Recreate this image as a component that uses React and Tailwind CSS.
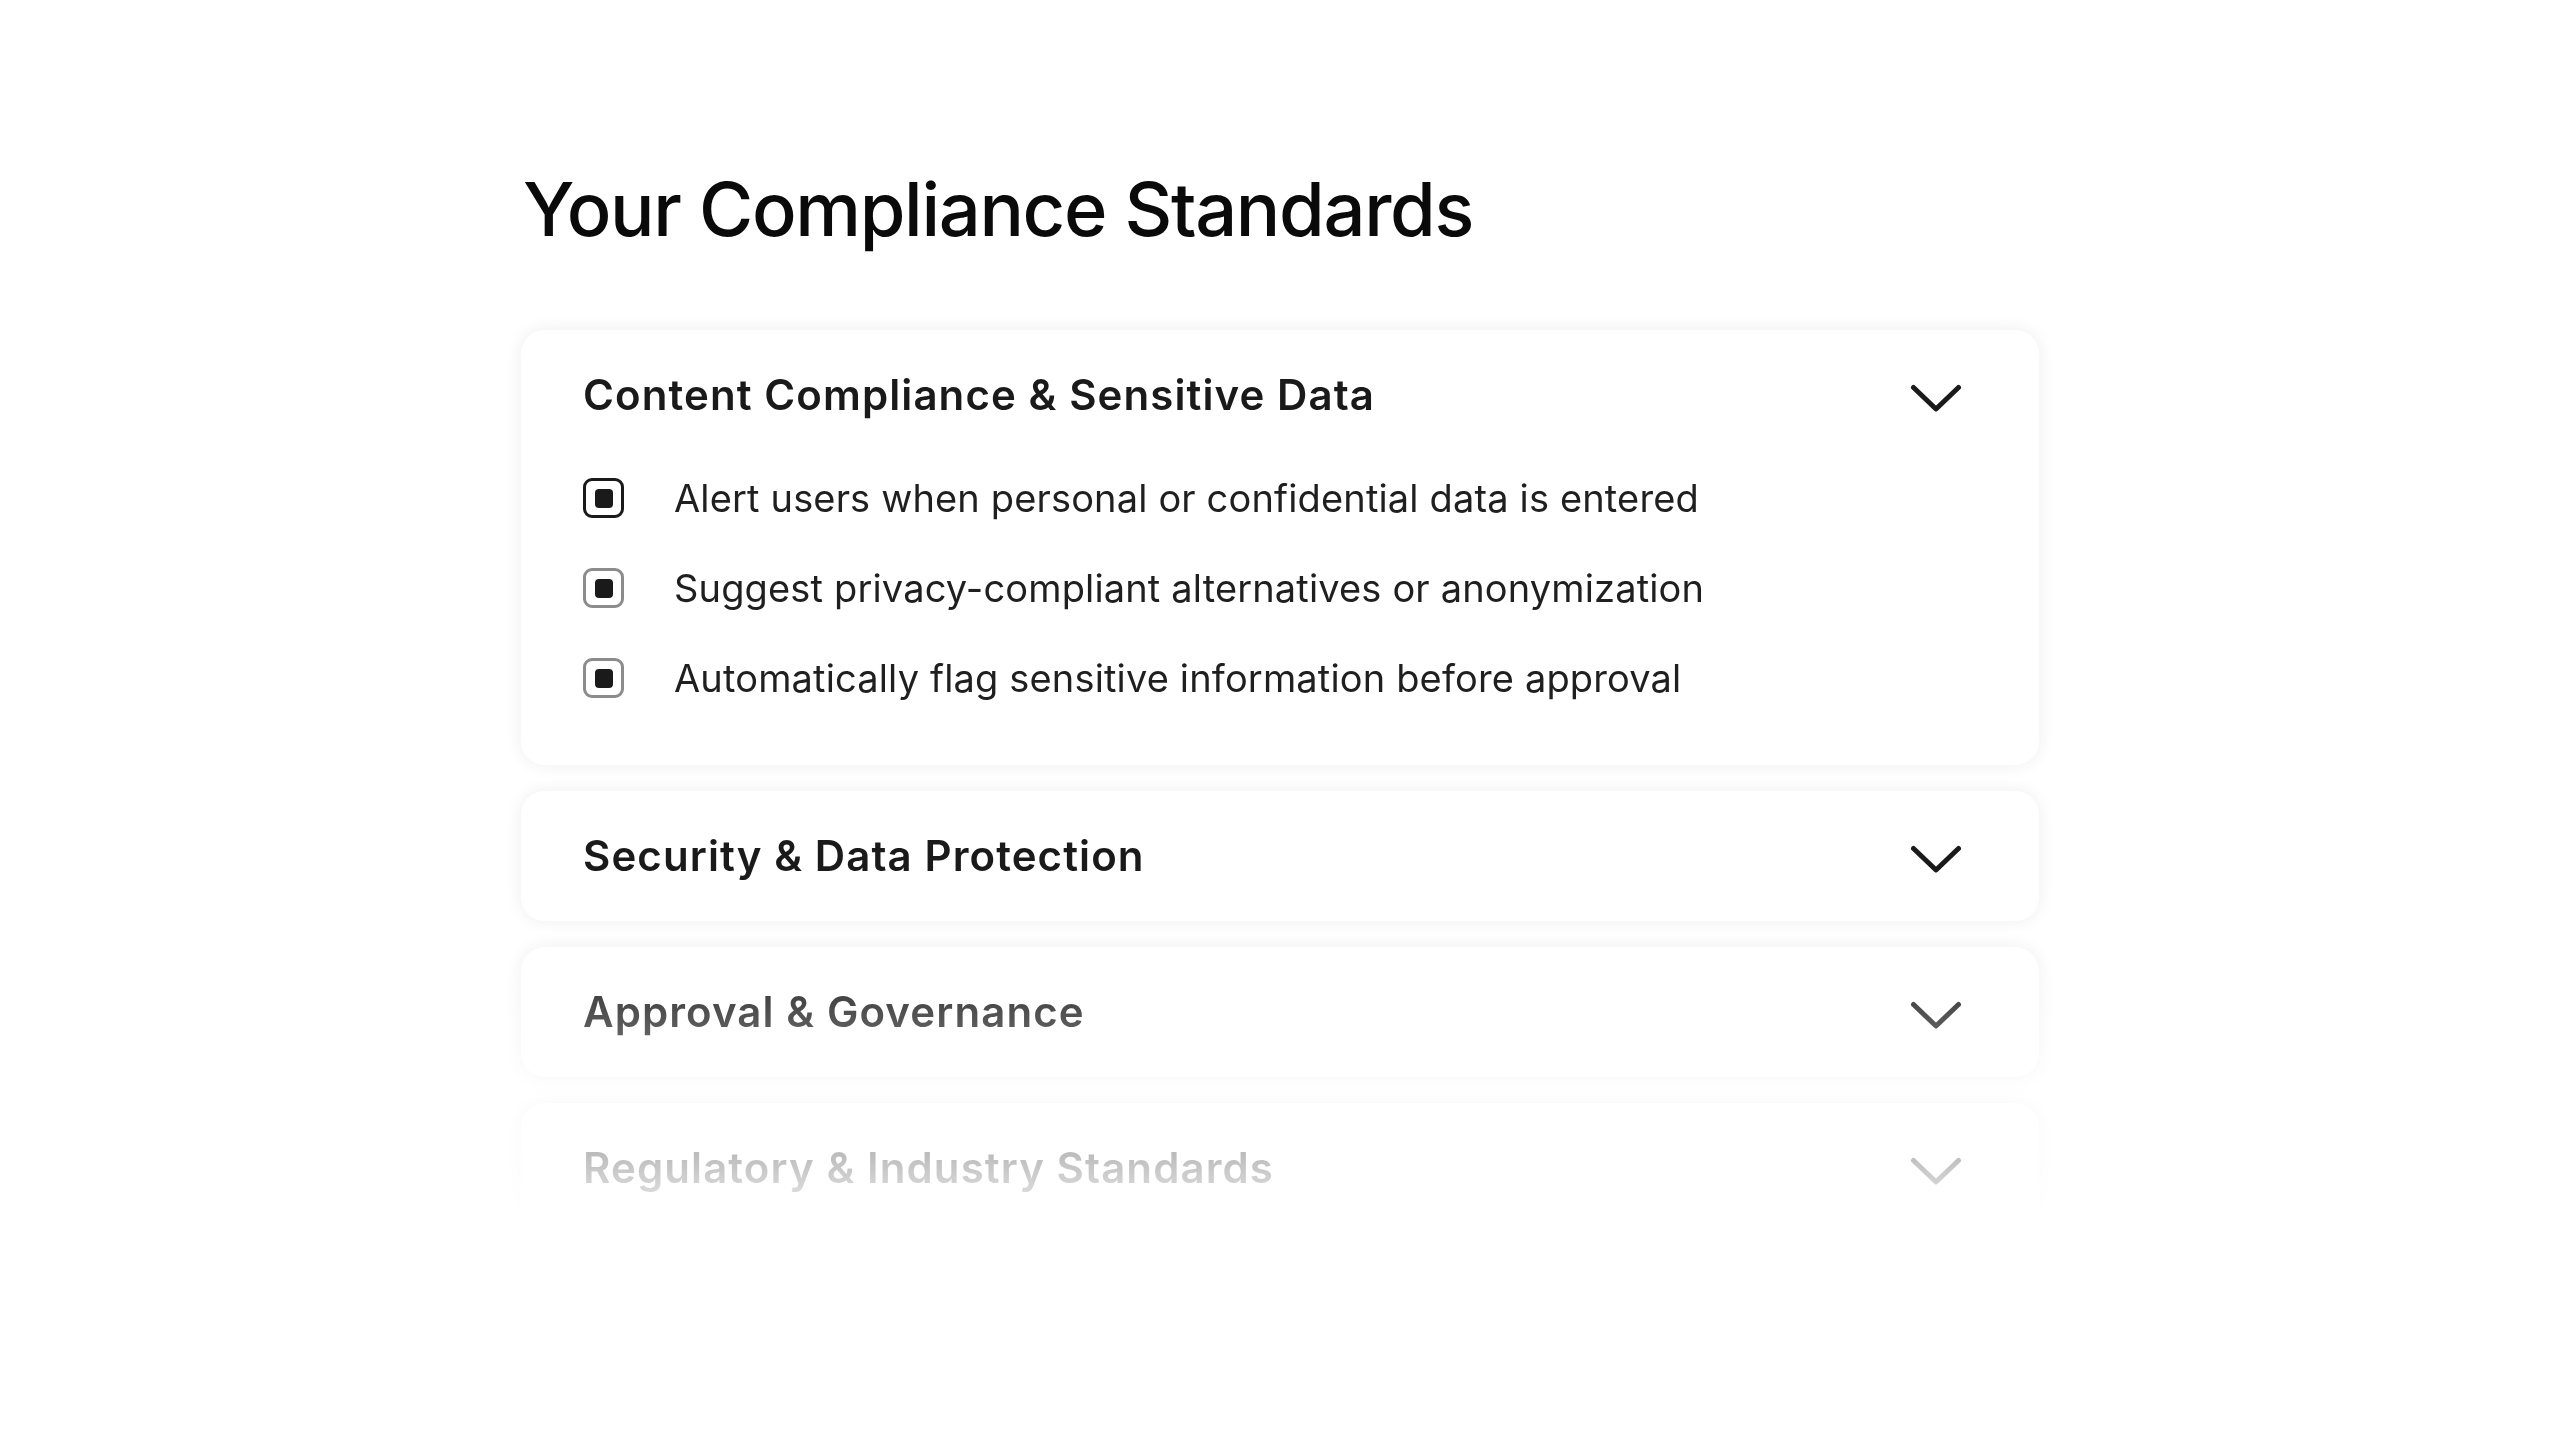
import React from 'react';

const sections = [
  {
    title: 'Content Compliance & Sensitive Data',
    open: true,
    items: [
      { label: 'Alert users when personal or confidential data is entered', active: true },
      { label: 'Suggest privacy-compliant alternatives or anonymization', active: false },
      { label: 'Automatically flag sensitive information before approval', active: false },
    ],
  },
  { title: 'Security & Data Protection' },
  { title: 'Approval & Governance' },
  { title: 'Regulatory & Industry Standards' },
];

const Chevron = () => (
  <svg width="52" height="28" viewBox="0 0 52 28" fill="none" className="mr-[15px] mt-[6px] shrink-0">
    <path d="M3.5 3.5 L26 25 L48.5 3.5" stroke="#1a1a1a" strokeWidth="5" strokeLinecap="round" strokeLinejoin="round" />
  </svg>
);

const Checkbox = ({ active }) => (
  <div
    className={`w-[41px] h-[40px] shrink-0 rounded-[9px] border-[3px] bg-white flex items-center justify-center ${
      active ? 'border-[#1a1a1a]' : 'border-[#8c8c8c]'
    }`}
  >
    <div className="w-[18px] h-[19px] rounded-[4px] bg-[#1a1a1a]" />
  </div>
);

export default function App() {
  return (
    <div className="min-h-screen bg-white font-['Inter','Noto_Sans',sans-serif] text-[#1a1a1a]">
      <div className="max-w-[1518px] mx-auto pt-[165px]">
        <h1 className="text-[74px] leading-[89px] font-medium tracking-[-0.018em] text-[#0a0a0a] pl-[2px]">
          Your Compliance Standards
        </h1>

        {/* accordion list, faded out toward the bottom */}
        <div className="mt-[56px] -mx-[20px] p-[20px] h-[902px] overflow-hidden [mask-image:linear-gradient(to_bottom,black_632px,transparent_931px)] [-webkit-mask-image:linear-gradient(to_bottom,black_632px,transparent_931px)]">
          <div className="flex flex-col gap-[26px]">
            {sections.map((s) => (
              <div
                key={s.title}
                className="bg-white rounded-[24px] shadow-[0_0_18px_rgba(0,0,0,0.07)] px-[62px] pt-[37px] pb-[37px]"
              >
                <div className="h-[56px] flex items-center justify-between">
                  <h2 className="text-[42px] leading-[56px] font-semibold tracking-[0.026em]">{s.title}</h2>
                  <Chevron />
                </div>
                {s.open && (
                  <div className="mt-[30px] mb-[5px] flex flex-col">
                    {s.items.map((it) => (
                      <div key={it.label} className="h-[90px] flex items-center gap-[50px]">
                        <Checkbox active={it.active} />
                        <span className="text-[38px] leading-[46px] tracking-[0.004em] text-[#1f1f1f]">{it.label}</span>
                      </div>
                    ))}
                  </div>
                )}
              </div>
            ))}
          </div>
        </div>
      </div>
    </div>
  );
}
